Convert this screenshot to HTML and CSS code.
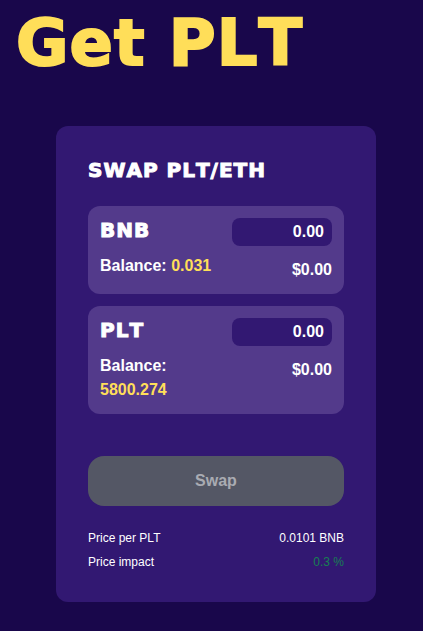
FILE: index.html
```html
<!DOCTYPE html>
<html lang="en">
<head>
    <meta charset="UTF-8">
    <meta name="viewport" content="width=device-width, initial-scale=1.0">
    <title>Get PLT</title>
    <link rel="stylesheet" href="styles.css">
</head>
<body>
    <h1 class="page-title">Get PLT</h1>

    <main>
        <form class="swap">
            <h2 class="swap-title">SWAP PLT/ETH</h2>

            <div class="token">
                <div class="token-info">
                    <label class="token-name" for="bnb">BNB</label>
                    <p>Balance: <span class="balance">0.031</span></p>
                </div>
                <div class="token-amount">
                    <input type="text" id="bnb" value="0.00" inputmode="decimal">
                    <p>$0.00</p>
                </div>
            </div>

            <div class="token">
                <div class="token-info">
                    <label class="token-name" for="plt">PLT</label>
                    <p>Balance: <span class="balance">5800.274</span></p>
                </div>
                <div class="token-amount">
                    <input type="text" id="plt" value="0.00" inputmode="decimal">
                    <p>$0.00</p>
                </div>
            </div>

            <button type="submit" class="swap-button" disabled>Swap</button>

            <dl class="details">
                <div class="detail">
                    <dt>Price per PLT</dt>
                    <dd>0.0101 BNB</dd>
                </div>
                <div class="detail">
                    <dt>Price impact</dt>
                    <dd class="impact">0.3 %</dd>
                </div>
            </dl>
        </form>
    </main>
</body>
</html>
```

FILE: styles.css
```css
* {
    box-sizing: border-box;
    margin: 0;
    padding: 0;
}
body {
    font-family: Arial, "Liberation Sans", sans-serif;
    font-size: 16px;
    line-height: 24px;
    color: #fff;
    background-color: #19074b;
}
.page-title,
.swap-title,
.token-name {
    font-family: "Arial Black", "DejaVu Sans", sans-serif;
    font-weight: 900;
    font-kerning: none;
    letter-spacing: 1px;
    -webkit-text-stroke: 1px;
}
.page-title {
    padding: 0 16px;
    font-size: 64px;
    line-height: 86px;
    color: #ffde59;
    -webkit-text-stroke: 2px;
}
main {
    padding: 40px 47px 28px 56px;
}
.swap {
    padding: 32px 32px 28px;
    background-color: #321872;
    border-radius: 12px;
}
.swap-title,
.token-name {
    font-size: 20px;
    line-height: 24px;
}
.swap-title {
    margin-bottom: 24px;
}
.token {
    display: flex;
    justify-content: space-between;
    margin-bottom: 12px;
    padding: 12px;
    font-weight: bold;
    background-color: #533a8b;
    border-radius: 12px;
}
.token-info,
.token-amount {
    display: flex;
    flex-direction: column;
    gap: 12px;
}
.token-amount {
    flex: 0 0 100px;
    text-align: right;
}
.balance {
    color: #ffde59;
}
input {
    width: 100%;
    height: 28px;
    padding: 0 8px;
    font: inherit;
    color: #fff;
    text-align: right;
    background-color: #321872;
    border: none;
    border-radius: 8px;
}
.swap-button {
    width: 100%;
    height: 50px;
    margin-top: 30px;
    font: inherit;
    font-weight: bold;
    color: #a9abb2;
    background-color: #545765;
    border: none;
    border-radius: 16px;
}
.details {
    margin-top: 20px;
    font-size: 12px;
}
.detail {
    display: flex;
    justify-content: space-between;
}
.impact {
    color: #178052;
}
```
